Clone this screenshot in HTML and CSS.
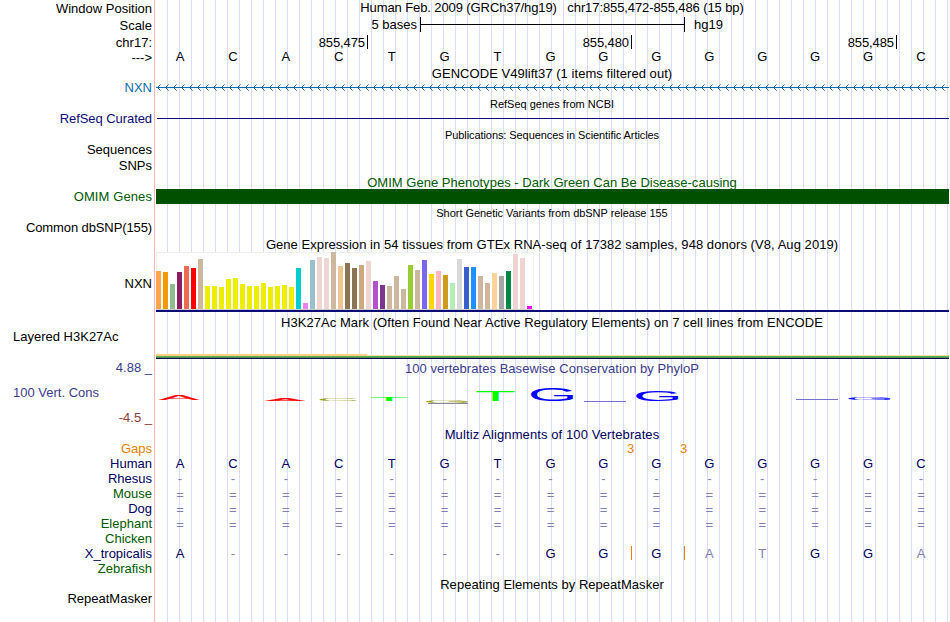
FILE: index.html
```
<!DOCTYPE html>
<html lang="en">
<head>
<meta charset="utf-8">
<title>chr17:855,472-855,486</title>
<link rel="stylesheet" href="styles.css">
</head>
<body>
<main class="browser">
<div class="row h17"><div class="label drop">Window Position</div><div class="title pos">Human Feb. 2009 (GRCh37/hg19) &nbsp; chr17:855,472-855,486 (15 bp)</div></div>
<div class="row h17"><div class="label drop">Scale</div><div class="scale"><span class="bases">5 bases</span><span class="bar"></span><span>hg19</span></div></div>
<div class="row h15"><div class="label drop">chr17:</div><div class="ticks drop"><span class="t1">855,475</span><span class="t2">855,480</span><span class="t3">855,485</span></div></div>
<div class="row h17"><div class="label drop">---&gt;</div><div class="seq"><b>A</b><b>C</b><b>A</b><b>C</b><b>T</b><b>G</b><b>T</b><b>G</b><b>G</b><b>G</b><b>G</b><b>G</b><b>G</b><b>G</b><b>C</b></div></div>
<div class="row h14"><div></div><div class="title gencode">GENCODE V49lift37 (1 items filtered out)</div></div>
<div class="row h16"><div class="label blue">NXN</div>
<svg width="793" height="16"><defs><pattern id="chev" width="8" height="16" patternUnits="userSpaceOnUse"><path d="M1 7h1v1h-1zM2 6h1v1h-1zM2 8h1v1h-1zM3 5h1v1h-1zM3 9h1v1h-1zM4 4h.6v1h-.6zM4 10h.6v1h-.6z" fill="#0c6cb0"/></pattern></defs><rect width="793" height="16" fill="url(#chev)"/><rect y="7" width="793" height="1" fill="#0c6cb0"/></svg></div>
<div class="row h15"><div></div><div class="title small drop">RefSeq genes from NCBI</div></div>
<div class="row h16"><div class="label indigo refseq">RefSeq Curated</div><div class="refline"></div></div>
<div class="row h15"><div></div><div class="title small drop pubs">Publications: Sequences in Scientific Articles</div></div>
<div class="row h16"><div class="label">Sequences</div></div>
<div class="row h16"><div class="label">SNPs</div></div>
<div class="row h15"><div></div><div class="title drop green omimt">OMIM Gene Phenotypes - Dark Green Can Be Disease-causing</div></div>
<div class="row h16"><div class="label green genes">OMIM Genes</div><div class="omim"></div></div>
<div class="row h15"><div></div><div class="title small drop snpt">Short Genetic Variants from dbSNP release 155</div></div>
<div class="row h16"><div class="label common">Common dbSNP(155)</div></div>
<div class="row h16"><div></div><div class="title drop gtext">Gene Expression in 54 tissues from GTEx RNA-seq of 17382 samples, 948 donors (V8, Aug 2019)</div></div>
<div class="row h62"><div class="label mid">NXN</div>
<svg width="793" height="62" shape-rendering="crispEdges">
<rect width="378" height="58" fill="#f0f0f0"/><rect y="1" x="1" width="376" height="56" fill="#fff"/><rect y="57" width="378" height="1" fill="#ccc"/><rect y="58" width="793" height="2" fill="#0c0c78"/>
<g transform="translate(0 57) scale(1 -1)">
<path fill="#ffa54f" d="M0 0h5v38h-5z"/><path fill="#ee9a00" d="M7 0h5v37h-5z"/><path fill="#8fbc8f" d="M14 0h5v25h-5z"/><path fill="#8b1c62" d="M21 0h5v37h-5z"/><path fill="#ee6a50" d="M28 0h5v43h-5z"/><path fill="#f00" d="M35 0h5v41h-5z"/><path fill="#cdb79e" d="M42 0h5v50h-5z"/>
<path fill="#eeee00" d="M49 0h5v23h-5zM56 0h5v23h-5zM63 0h5v22h-5zM70 0h5v30h-5zM77 0h5v31h-5zM84 0h5v25h-5zM91 0h5v23h-5zM98 0h5v23h-5zM105 0h5v26h-5zM112 0h5v22h-5zM119 0h5v23h-5zM126 0h5v24h-5zM133 0h5v22h-5z"/>
<path fill="#00cdcd" d="M140 0h5v41h-5z"/><path fill="#ee82ee" d="M147 0h5v6h-5z"/><path fill="#9ac0cd" d="M154 0h5v49h-5z"/><path fill="#eed5d2" d="M161 0h5v52h-5zM168 0h5v51h-5zM210 0h5v48h-5zM357 0h5v55h-5zM364 0h5v51h-5z"/>
<path fill="#cdb79e" d="M175 0h5v57h-5zM231 0h5v23h-5zM238 0h5v33h-5zM245 0h5v20h-5zM259 0h5v39h-5zM322 0h5v33h-5zM329 0h5v26h-5z"/><path fill="#eec591" d="M182 0h5v43h-5z"/><path fill="#8b7355" d="M189 0h5v46h-5zM196 0h5v41h-5z"/><path fill="#cdaa7d" d="M203 0h5v44h-5z"/>
<path fill="#b452cd" d="M217 0h5v28h-5z"/><path fill="#7a378b" d="M224 0h5v24h-5z"/><path fill="#9acd32" d="M252 0h5v44h-5z"/><path fill="#7a67ee" d="M266 0h5v49h-5z"/><path fill="#ffd700" d="M273 0h5v35h-5z"/><path fill="#ffb6c1" d="M280 0h5v38h-5z"/><path fill="#cd9b1d" d="M287 0h5v34h-5z"/><path fill="#b4eeb4" d="M294 0h5v26h-5z"/><path fill="#d9d9d9" d="M301 0h5v50h-5z"/><path fill="#3a5fcd" d="M308 0h5v42h-5z"/><path fill="#1e90ff" d="M315 0h5v42h-5z"/><path fill="#ffd39b" d="M336 0h5v36h-5z"/><path fill="#a6a6a6" d="M343 0h5v33h-5z"/><path fill="#008b45" d="M350 0h5v38h-5z"/><path fill="#f0f" d="M371 0h5v3h-5z"/>
</g></svg></div>
<div class="row h15"><div></div><div class="title drop h3kt">H3K27Ac Mark (Often Found Near Active Regulatory Elements) on 7 cell lines from ENCODE</div></div>
<div class="row h31"><div class="label left">Layered H3K27Ac</div>
<svg width="793" height="31" shape-rendering="crispEdges"><rect y="25" width="211" height="2" fill="#ffd080"/><rect x="211" y="26" width="582" height="1" fill="#f0e09a"/><rect y="27" width="793" height="1" fill="#55b555"/><rect y="28" width="793" height="1" fill="#5a8a50"/><rect y="29" width="793" height="1" fill="#0c0c50"/></svg></div>
<div class="row h16"><div class="label slate">4.88 _</div><div class="title drop slate vert">100 vertebrates Basewise Conservation by PhyloP</div></div>
<div class="row h34"><div class="label left cons slate">100 Vert. Cons</div>
<svg class="logo" width="793" height="34">
<g fill="#f00" stroke="#f00" stroke-width=".15"><text transform="translate(3 24) scale(6 .65)">A</text><text transform="translate(109 25) scale(6 .35)">A</text></g>
<g fill="#a0a018"><text transform="translate(160.5 24.8) scale(6 .34)">C</text><text transform="translate(267 27.3) scale(6.3 .28)">G</text></g>
<g fill="#0f0"><text transform="translate(213 25.2) scale(6.6 .58)">T</text><text transform="translate(319 25) scale(6.7 1.42)">T</text></g>
<g fill="#00f"><text transform="translate(371.8 24.7) scale(6.4 1.8)">G</text><text transform="translate(477 24.8) scale(6.4 1.4)">G</text><text transform="translate(689 23.8) scale(6.4 .34)">G</text></g>
<rect x="428" y="25" width="42" height="1" fill="#7474cc"/><rect x="640" y="23" width="42" height="1" fill="#7474cc"/><rect x="272" y="27" width="40" height="1" fill="#8888a0"/>
</svg></div>
<div class="row h16"><div class="label maroon">-4.5 _</div></div>
<div class="row h15"><div></div><div class="title drop navy multiz">Multiz Alignments of 100 Vertebrates</div></div>
<div class="row h15 orange"><div class="label">Gaps</div><div class="gaps"><span>3</span><span>3</span></div></div>
<div class="row h15 navy"><div class="label">Human</div><div class="seq"><b>A</b><b>C</b><b>A</b><b>C</b><b>T</b><b>G</b><b>T</b><b>G</b><b>G</b><b>G</b><b>G</b><b>G</b><b>G</b><b>G</b><b>C</b></div></div>
<div class="row h15 navy"><div class="label">Rhesus</div><div class="seq dim"><b>-</b><b>-</b><b>-</b><b>-</b><b>-</b><b>-</b><b>-</b><b>-</b><b>-</b><b>-</b><b>-</b><b>-</b><b>-</b><b>-</b><b>-</b></div></div>
<div class="row h15 green"><div class="label">Mouse</div><div class="seq dim eq"><b>=</b><b>=</b><b>=</b><b>=</b><b>=</b><b>=</b><b>=</b><b>=</b><b>=</b><b>=</b><b>=</b><b>=</b><b>=</b><b>=</b><b>=</b></div></div>
<div class="row h15 navy"><div class="label">Dog</div><div class="seq dim eq"><b>=</b><b>=</b><b>=</b><b>=</b><b>=</b><b>=</b><b>=</b><b>=</b><b>=</b><b>=</b><b>=</b><b>=</b><b>=</b><b>=</b><b>=</b></div></div>
<div class="row h15 green"><div class="label">Elephant</div><div class="seq dim eq"><b>=</b><b>=</b><b>=</b><b>=</b><b>=</b><b>=</b><b>=</b><b>=</b><b>=</b><b>=</b><b>=</b><b>=</b><b>=</b><b>=</b><b>=</b></div></div>
<div class="row h15 green"><div class="label">Chicken</div></div>
<div class="row h15 navy"><div class="label">X_tropicalis</div><div class="seq"><b>A</b><b class="dim">-</b><b class="dim">-</b><b class="dim">-</b><b class="dim">-</b><b class="dim">-</b><b class="dim">-</b><b>G</b><b>G</b><b class="ins">G</b><b class="dim ins">A</b><b class="dim">T</b><b>G</b><b>G</b><b class="dim">A</b></div></div>
<div class="row h15 green"><div class="label">Zebrafish</div></div>
<div class="row h15"><div></div><div class="title drop rept">Repeating Elements by RepeatMasker</div></div>
<div class="row h31"><div class="label">RepeatMasker</div></div>
</main>
</body>
</html>
```
FILE: styles.css
```
body {
  margin: 0;
  background: #fff;
  color: #000;
  font: 13px/15px "Liberation Sans", Arial, sans-serif;
}
.browser {
  width: 950px;
  height: 622px;
  overflow: hidden;
  background:
    linear-gradient(#ffb4b4, #ffb4b4) 154px 0 / 1px 100% no-repeat,
    repeating-linear-gradient(90deg, #dcdcff 0 1px, transparent 1px 12px) 167px 0 / 792px 100% no-repeat;
}
.row {
  display: grid;
  grid-template-columns: 152px 794px;
  column-gap: 4px;
  white-space: nowrap;
}
.row svg { display: block; }
.h14 { height: 14px; }
.h15 { height: 15px; }
.h16 { height: 16px; }
.h17 { height: 17px; }
.h31 { height: 31px; }
.h34 { height: 34px; }
.h62 { height: 62px; }
.label { text-align: right; }
.drop { margin-top: 1px; }
.label.mid { margin-top: 24px; }
.label.left { text-align: left; padding-left: 13px; }
.label.cons { margin-top: 9px; }
.title { text-align: center; margin-right: 2px; }
.small { font-size: 11px; }
.pos { letter-spacing: -0.1px; }
.gencode { letter-spacing: 0.05px; }
.pubs { letter-spacing: -0.08px; }
.snpt { letter-spacing: -0.04px; }
.omimt { letter-spacing: 0.02px; }
.gtext { letter-spacing: 0.055px; }
.h3kt { letter-spacing: 0.05px; }
.vert { letter-spacing: 0.045px; }
.multiz { letter-spacing: 0.1px; }
.rept { letter-spacing: 0.03px; }
.refseq { letter-spacing: -0.07px; }
.genes { letter-spacing: 0.1px; }
.common { letter-spacing: -0.11px; }
.blue { color: #0c6cb0; }
.indigo { color: #0c0c78; }
.navy { color: #000060; }
.green { color: #005a00; }
.slate { color: #3c3c8c; }
.maroon { color: #8c3c3c; }
.orange { color: #e68200; }
.scale { display: flex; }
.bases { width: 261px; padding-right: 3px; text-align: right; }
.bar {
  width: 263px;
  height: 15px;
  margin-right: 9px;
  border: solid #000;
  border-width: 0 1px;
  background: linear-gradient(#000, #000) 0 7px / 100% 1px no-repeat;
}
.ticks { display: flex; letter-spacing: -0.1px; }
.ticks span {
  box-sizing: border-box;
  height: 14px;
  padding-right: 2px;
  border-right: 1px solid #000;
  text-align: right;
}
.t1 { width: 212px; }
.t2 { width: 264px; }
.t3 { width: 265px; }
.seq {
  display: grid;
  grid-template-columns: repeat(15, 1fr);
  margin-left: -2.5px;
  margin-right: 2.5px;
  text-align: center;
}
.seq b { font-weight: normal; }
.dim { color: #8080b4; }
.eq { padding-top: 1px; }
.ins {
  height: 14px;
  background: linear-gradient(#e68200, #e68200) 1px 0 / 1px 100% no-repeat;
}
.refline { width: 792px; height: 1px; margin: 7px 0 0 1px; background: #0c0c78; }
.omim { width: 793px; height: 15px; background: #005000; }
.logo text { font: 10px "Liberation Sans", Arial, sans-serif; }
.gaps { display: flex; padding-left: 448px; }
.gaps span { width: 53px; text-align: center; }
```
